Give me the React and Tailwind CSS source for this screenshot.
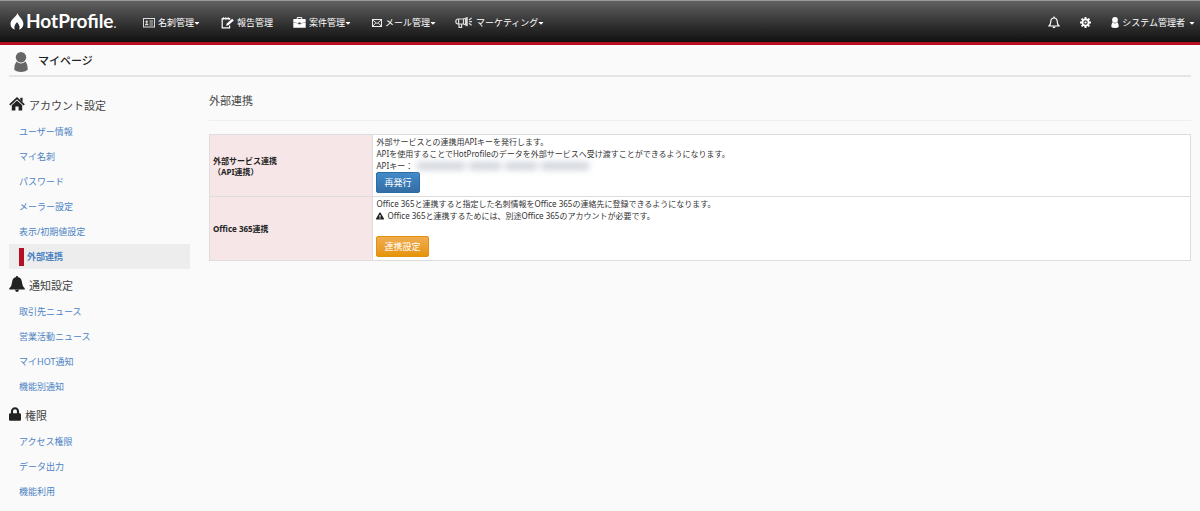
import React from "react";
import clsx from "clsx";
import { FaLock, FaExclamationTriangle, FaCaretDown } from "react-icons/fa";

const CardIcon = () => (
  <svg width="12" height="10" viewBox="0 0 12 10" aria-hidden="true">
    <rect x="0.5" y="0.5" width="11" height="8.5" fill="none" stroke="#ddd" />
    <circle cx="3.7" cy="3.7" r="1.2" fill="#ddd" />
    <path d="M2 7.2V6.4Q3.7 4 5.4 6.4V7.2Z" fill="#ddd" />
    <path d="M6.5 3h3.6M6.5 5h3.6M6.5 7h3.6" stroke="#ddd" strokeWidth="0.9" />
  </svg>
);

const ReportIcon = () => (
  <svg width="13" height="12" viewBox="0 0 13 12" aria-hidden="true">
    <path
      d="M8.6 2.8V1.6H1.2V10.8H8.6V8.6"
      fill="none"
      stroke="#fff"
      strokeWidth="1.2"
    />
    <path d="M2.6 0.2v2.4M4.9 0.2v2.4M7.2 0.2v2.4" stroke="#fff" />
    <path d="M5 8.8L5.8 6.4L11.2 1.8L12.8 3.4L7.4 8.2Z" fill="#fff" />
  </svg>
);

const CaseIcon = () => (
  <svg width="13" height="11" viewBox="0 0 13 11" aria-hidden="true">
    <path d="M4.2 2.5V0.6H8.8V2.5" fill="none" stroke="#fff" />
    <path
      d="M1 2H12Q12.7 2 12.7 2.8V5.2L7.6 6.3V5.6H5.4V6.3L0.3 5.2V2.8Q0.3 2 1 2Z"
      fill="#fff"
    />
    <path d="M0.3 5.5L5.4 6.6V7.2H7.6V6.6L12.7 5.5V10.8H0.3Z" fill="#fff" />
  </svg>
);

const MailIcon = () => (
  <svg width="10" height="8" viewBox="0 0 10 8" aria-hidden="true">
    <rect x="0.5" y="0.5" width="9" height="7" fill="none" stroke="#eee" />
    <path
      d="M1 1.2L5 4.6L9 1.2M1 7L3.7 4M9 7L6.3 4"
      fill="none"
      stroke="#eee"
      strokeWidth="0.9"
    />
  </svg>
);

const MegaphoneIcon = () => (
  <svg width="18" height="11" viewBox="0 0 18 11" aria-hidden="true">
    <g fill="none" stroke="#ddd" strokeWidth="1.2">
      <path d="M8.5 2H3Q0.8 2.2 0.8 4.5T3 7H8.5Z" />
      <path d="M3.6 2v5M4 7v3.3h2.6V7" />
      <path d="M8.5 2L12 0.7V8.6L8.5 7" />
      <path d="M14 3l2.6-2M14.3 4.7H17M14 6.3l2.6 2" />
    </g>
    <path d="M10 1.8L12.4 0.6V8.8L10 7.6Z" fill="#ddd" />
  </svg>
);

const BellOutlineIcon = () => (
  <svg width="12" height="13" viewBox="0 0 12 13" aria-hidden="true">
    <path
      d="M0.8 10Q2.7 8.6 2.8 5.4Q3 2 6 2T9.2 5.4Q9.3 8.6 11.2 10Z"
      fill="none"
      stroke="#fff"
      strokeWidth="1.2"
      strokeLinejoin="round"
    />
    <path d="M6 0.4V2" stroke="#fff" strokeWidth="1.3" />
    <path d="M4.4 10.6H7.6Q7.3 12.3 6 12.3T4.4 10.6Z" fill="#fff" />
  </svg>
);

const GearIcon = () => (
  <svg width="11" height="11" viewBox="0 0 11 11" aria-hidden="true">
    <g stroke="#fff" strokeWidth="2">
      <path d="M5.5 0V2.5M5.5 8.5V11M0 5.5H2.5M8.5 5.5H11" />
      <path d="M1.6 1.6L3.4 3.4M7.6 7.6L9.4 9.4M1.6 9.4L3.4 7.6M7.6 3.4L9.4 1.6" />
    </g>
    <circle
      cx="5.5"
      cy="5.5"
      r="3.1"
      fill="none"
      stroke="#fff"
      strokeWidth="1.8"
    />
    <circle cx="5.5" cy="5.5" r="1.1" fill="#fff" />
  </svg>
);

const PersonIcon = ({ className }) => (
  <svg className={className} viewBox="0 0 14 20" aria-hidden="true">
    <circle cx="7" cy="5.3" r="5.2" fill="currentColor" />
    <path
      d="M2.4 9.6Q7 13.6 11.6 9.6Q13.8 12.6 13.8 17.6Q12 20 7 20T0.2 17.6Q0.2 12.6 2.4 9.6Z"
      fill="currentColor"
    />
  </svg>
);

const HomeIcon = ({ className }) => (
  <svg className={className} viewBox="0 0 16 16" aria-hidden="true">
    <path
      d="M0.8 8.8L8 2.2L15.2 8.8"
      fill="none"
      stroke="currentColor"
      strokeWidth="1.8"
    />
    <path d="M11.3 1.8H13.6V6L11.3 4Z" fill="currentColor" />
    <path
      d="M8 4.6L13.2 9.3V14.5H9.6V10.6H6.4V14.5H2.8V9.3Z"
      fill="currentColor"
    />
  </svg>
);

const BellIcon = ({ className }) => (
  <svg className={className} viewBox="0 0 16 16" aria-hidden="true">
    <path
      d="M8 0Q9.2 0 9.2 1.3Q12.6 2 12.9 6Q13.2 10.4 15.8 12.4V13.6H0.2V12.4Q2.8 10.4 3.1 6Q3.4 2 6.8 1.3Q6.8 0 8 0Z"
      fill="currentColor"
    />
    <path d="M6 13.4H10Q9.6 16 8 16T6 13.4Z" fill="currentColor" />
  </svg>
);

const FlameIcon = () => (
  <svg width="14" height="17" viewBox="0 0 14 17" aria-hidden="true">
    <path
      d="M7.6 0C8.2 3.4 13.4 6.2 13.4 11C13.4 14 11.2 16 8.8 16.6C10.6 14.6 9.2 11.4 7 9.2C4.8 11.4 3.4 14.6 5.2 16.6C2.6 16 0.5 14 0.5 11C0.5 6.2 6.2 4.2 7.6 0Z"
      fill="#fff"
    />
  </svg>
);

const navItems = [
  { label: "名刺管理", icon: CardIcon, menu: true, space: "mr-[22px]" },
  { label: "報告管理", icon: ReportIcon, menu: false, space: "mr-5" },
  { label: "案件管理", icon: CaseIcon, menu: true, space: "mr-[22px]" },
  { label: "メール管理", icon: MailIcon, menu: true, space: "mr-5" },
  { label: "マーケティング", icon: MegaphoneIcon, menu: true, space: "" },
];

const sections = [
  {
    title: "アカウント設定",
    icon: HomeIcon,
    size: "size-4",
    items: [
      "ユーザー情報",
      "マイ名刺",
      "パスワード",
      "メーラー設定",
      "表示/初期値設定",
      "外部連携",
    ],
  },
  {
    title: "通知設定",
    icon: BellIcon,
    size: "size-4",
    items: ["取引先ニュース", "営業活動ニュース", "マイHOT通知", "機能別通知"],
  },
  {
    title: "権限",
    icon: FaLock,
    size: "w-3 h-4",
    items: ["アクセス権限", "データ出力", "機能利用"],
  },
];

const Header = () => (
  <header className="flex h-[45px] items-center border-t border-b-3 border-t-[#999] border-b-[#b60f24] bg-linear-to-b from-[#626262] to-[#111] pr-1 pl-2.5 text-white">
    <a href="#" className="flex w-[133px] items-center gap-0.5">
      <FlameIcon />
      <span className="font-[Lato] text-[19px] leading-5 font-bold">
        HotProfile<span className="text-xs text-gray-300">.</span>
      </span>
    </a>
    <nav className="flex items-center pt-0.5">
      {navItems.map(({ label, icon: Icon, menu, space }) => (
        <button
          key={label}
          className={clsx("flex items-center text-[9px]", space)}
        >
          <Icon />
          <span className="ml-[3px]">{label}</span>
          {menu && <FaCaretDown className="-mr-0.5 -ml-px size-2" />}
        </button>
      ))}
    </nav>
    <div className="ml-auto flex items-center pt-0.5">
      <button className="mr-5" aria-label="通知">
        <BellOutlineIcon />
      </button>
      <button className="mr-5" aria-label="設定">
        <GearIcon />
      </button>
      <button className="flex items-center gap-[3px] text-[9px]">
        <PersonIcon className="h-[11px] w-2" />
        <span>システム管理者</span>
        <FaCaretDown className="size-2" />
      </button>
    </div>
  </header>
);

const Sidebar = ({ current }) => (
  <aside className="w-[181px] shrink-0 pt-3">
    {sections.map(({ title, icon: Icon, size, items }) => (
      <section key={title}>
        <h3 className="flex h-[30px] items-center gap-1 pt-1 text-[11px] text-[#444]">
          <Icon className={clsx("mb-1 text-[#222]", size)} />
          {title}
        </h3>
        <ul>
          {items.map((item) => (
            <li key={item}>
              <a
                href="#"
                className={clsx(
                  "flex h-[25px] items-center pl-2.5 text-[9px] text-[#4b83c3]",
                  item === current && "bg-[#ededed] font-bold"
                )}
              >
                {item === current && (
                  <span className="mr-[3px] h-[18px] w-[5px] bg-[#b60f24]" />
                )}
                {item}
              </a>
            </li>
          ))}
        </ul>
      </section>
    ))}
  </aside>
);

const thClass =
  "w-1/6 border border-[#ddd] bg-[#f7e6e7] px-[3px] text-left align-middle text-[8px] leading-[11px] font-bold text-[#222]";
const tdClass =
  "border border-[#ddd] bg-white px-[3px] pt-px pb-[3px] align-top text-[8px] leading-3";

const App = () => (
  <div className="min-h-screen bg-[#fafafa] font-['Noto_Sans','Noto_Sans_CJK_JP',sans-serif] text-[#333]">
    <Header />
    <div className="px-[9px]">
      <h1 className="flex h-8 items-center gap-2.5 border-b-2 border-[#e5e5e5] pt-0.5 pl-[5px] text-[11px] font-medium text-[#222]">
        <PersonIcon className="mt-0.5 h-5 w-3.5 text-[#666]" />
        マイページ
      </h1>
      <div className="flex gap-[19px]">
        <Sidebar current="外部連携" />
        <main className="min-w-0 flex-1 pt-4">
          <h2 className="mb-[13px] border-b border-[#eee] pb-[11px] text-[11px] leading-4 text-[#444]">
            外部連携
          </h2>
          <table className="w-full border-collapse">
            <tbody>
              <tr>
                <th scope="row" className={thClass}>
                  外部サービス連携
                  <br />
                  （API連携）
                </th>
                <td className={tdClass}>
                  <p>外部サービスとの連携用APIキーを発行します。</p>
                  <p>
                    APIを使用することでHotProfileのデータを外部サービスへ受け渡すことができるようになります。
                  </p>
                  <div className="flex items-center">
                    APIキー：
                    {/* the key itself stays unreadable */}
                    <span className="flex gap-1 pl-1 blur-[3px]">
                      <span className="h-2 w-12 bg-gray-300" />
                      <span className="h-2 w-8 bg-gray-300" />
                      <span className="h-2 w-8 bg-gray-300" />
                      <span className="h-2 w-12 bg-gray-300" />
                    </span>
                  </div>
                  <button className="block h-[21px] rounded-xs border border-[#2d6ca2] bg-linear-to-b from-[#428bca] to-[#346da4] px-[7px] text-[9px] leading-3 text-white">
                    再発行
                  </button>
                </td>
              </tr>
              <tr>
                <th scope="row" className={thClass}>
                  Office 365連携
                </th>
                <td className={tdClass}>
                  <p>
                    Office
                    365と連携すると指定した名刺情報をOffice 365の連絡先に登録できるようになります。
                  </p>
                  <p className="flex items-center gap-[3px]">
                    <FaExclamationTriangle className="size-2 text-[#222]" />
                    Office 365と連携するためには、別途Office
                    365のアカウントが必要です。
                  </p>
                  <button className="mt-3.5 block h-[21px] rounded-xs border border-[#e0910f] bg-linear-to-b from-[#f0ad4e] to-[#e59400] px-[7px] text-[9px] leading-3 text-white">
                    連携設定
                  </button>
                </td>
              </tr>
            </tbody>
          </table>
        </main>
      </div>
    </div>
  </div>
);

export default App;
